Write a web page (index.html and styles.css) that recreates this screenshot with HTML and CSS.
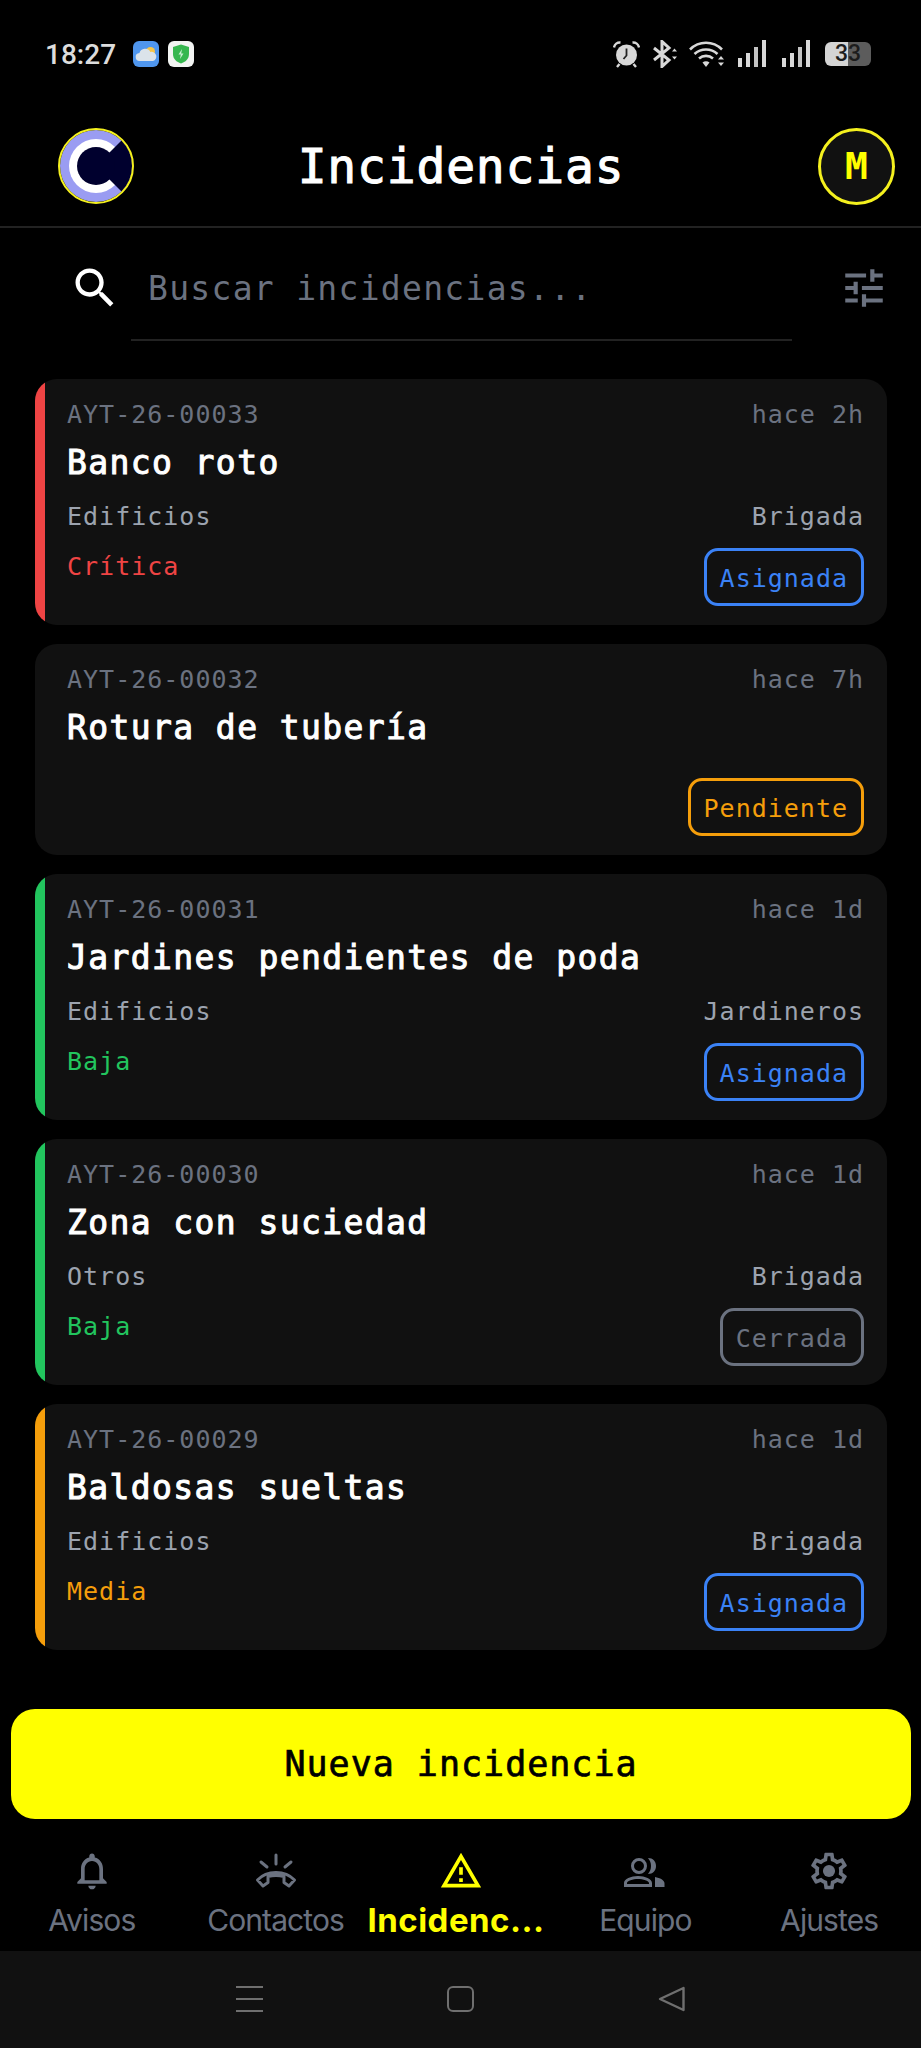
FILE: index.html
```html
<!DOCTYPE html>
<html lang="es">
<head>
  <meta charset="UTF-8" />
  <meta name="viewport" content="width=device-width, initial-scale=1.0"/>
  <title>Incidencias</title>
  <link rel="stylesheet" href="styles.css">
</head>
<body>
  <div class="app">

    <div class="status-bar">
      <div class="status-left">
        <span class="clock">18:27</span>
        <svg class="app-icon" viewBox="0 0 26 26">
          <rect width="26" height="26" rx="6" fill="#4f96ee"/>
          <circle cx="17.500" cy="10.500" r="4.500" fill="#f6c548"/>
          <path d="M7 20a4 4 0 0 1-.6-8 6 6 0 0 1 11-1 4.600 4.600 0 0 1 2.600 9z" fill="#dbe3ea"/>
        </svg>
        <svg class="app-icon" viewBox="0 0 26 26">
          <rect width="26" height="26" rx="6" fill="#f2f4f2"/>
          <path d="M13 3.500l8 2.500v7c0 5-3.500 8-8 9.500-4.500-1.500-8-4.500-8-9.500v-7z" fill="#36b74f"/>
          <path d="M14 8l-3.500 5.500h2.300l-.8 4.500 3.500-5.600h-2.300z" fill="#c9f0d2"/>
        </svg>
      </div>
      <div class="status-right">
        <svg class="st-alarm" viewBox="0 0 27 28">
          <circle cx="13.500" cy="15" r="10.500" fill="#d8d8d8"/>
          <path d="M13.500 8.500v7l-3 3.500" fill="none" stroke="#222" stroke-width="1.800"/>
          <path d="M1 7.500a6 6 0 0 1 6.500-5M26 7.500a6 6 0 0 0-6.500-5M6.500 24l-2.500 3M20.500 24l2.500 3" fill="none" stroke="#d8d8d8" stroke-width="2.400"/>
        </svg>
        <svg class="st-bt" viewBox="0 0 26 28">
          <path d="M2 8l15 12-7 6.500V1.500l7 6.500L2 20" fill="none" stroke="#d8d8d8" stroke-width="3"/>
          <path d="M20 11.500l2.500-3 2.500 3zM20 16.500l2.500 3 2.500-3z" fill="#d8d8d8"/>
        </svg>
        <svg class="st-wifi" viewBox="0 0 37 28">
          <path d="M1 9.500c9-9 23-9 32 0M5.500 14c6.500-6 16.500-6 23 0M10 18.500c4-3.500 10-3.500 14 0" fill="none" stroke="#d8d8d8" stroke-width="2.600"/>
          <path d="M13.500 22.500c2-1.600 5-1.600 7 0L17 27z" fill="#d8d8d8"/>
          <path d="M29 19.500l3-3.500 3 3.500zM29 22.500l3 3.500 3-3.500z" fill="#d8d8d8"/>
        </svg>
        <svg class="st-signal" viewBox="0 0 28 28">
          <rect x="0" y="18" width="4" height="9" fill="#d8d8d8"/>
          <rect x="8" y="13" width="4" height="14" fill="#d8d8d8"/>
          <rect x="16" y="7" width="4" height="20" opacity=".9" fill="#d8d8d8"/>
          <rect x="24" y="0" width="4" height="27" fill="#d8d8d8"/>
        </svg>
        <svg class="st-signal" viewBox="0 0 28 28">
          <rect x="0" y="18" width="4" height="9" fill="#d8d8d8"/>
          <rect x="8" y="13" width="4" height="14" fill="#d8d8d8"/>
          <rect x="16" y="7" width="4" height="20" opacity=".9" fill="#d8d8d8"/>
          <rect x="24" y="0" width="4" height="27" fill="#d8d8d8"/>
        </svg>
        <div class="battery"><span>33</span></div>
      </div>
    </div>

    <div class="top-bar">
      <svg class="logo" viewBox="0 0 76 76">
        <circle cx="38" cy="38" r="36" fill="#9a9cf2"/>
        <circle cx="38" cy="38" r="27" fill="#fff"/>
        <path d="M38 38L63.500 12.500A36 36 0 0 1 63.500 63.500z" fill="#00002e"/>
        <circle cx="38" cy="38" r="19" fill="#00002e"/>
        <circle cx="38" cy="38" r="37" fill="none" stroke="#f4f01e" stroke-width="2"/>
      </svg>
      <h1 class="page-title">Incidencias</h1>
      <div class="avatar">M</div>
    </div>

    <div class="search-row">
      <svg class="search-icon" viewBox="0 0 24 24">
        <path fill="#fff" d="M15.500 14h-.79l-.28-.27C15.410 12.590 16 11.110 16 9.500 16 5.910 13.090 3 9.500 3S3 5.910 3 9.500 5.910 16 9.500 16c1.610 0 3.090-.59 4.230-1.570l.27.28v.79l5 4.990L20.490 19l-4.990-5zm-6 0C7.010 14 5 11.990 5 9.500S7.010 5 9.500 5 14 7.010 14 9.500 11.990 14 9.500 14z"/>
      </svg>
      <div class="search-input">Buscar incidencias...</div>
      <svg class="filter-icon" viewBox="0 0 24 24">
        <path fill="#6b7280" d="M3 17v2h6v-2H3zM3 5v2h10V5H3zm10 16v-2h8v-2h-8v-2h-2v6h2zM7 9v2H3v2h4v2h2V9H7zm14 4v-2H11v2h10zm-6-4h2V7h4V5h-4V3h-2v6z"/>
      </svg>
    </div>

    <div class="card-list">
      <div class="card card-critica">
        <div class="card-row"><span class="card-id">AYT-26-00033</span><span class="card-time">hace 2h</span></div>
        <div class="card-title">Banco roto</div>
        <div class="card-row card-meta"><span>Edificios</span><span>Brigada</span></div>
        <div class="card-row card-foot">
          <span class="prio prio-critica">Crítica</span>
          <span class="badge badge-asignada">Asignada</span>
        </div>
      </div>

      <div class="card">
        <div class="card-row"><span class="card-id">AYT-26-00032</span><span class="card-time">hace 7h</span></div>
        <div class="card-title">Rotura de tubería</div>
        <div class="card-row card-foot card-foot-solo">
          <span></span>
          <span class="badge badge-pendiente">Pendiente</span>
        </div>
      </div>

      <div class="card card-baja">
        <div class="card-row"><span class="card-id">AYT-26-00031</span><span class="card-time">hace 1d</span></div>
        <div class="card-title">Jardines pendientes de poda</div>
        <div class="card-row card-meta"><span>Edificios</span><span>Jardineros</span></div>
        <div class="card-row card-foot">
          <span class="prio prio-baja">Baja</span>
          <span class="badge badge-asignada">Asignada</span>
        </div>
      </div>

      <div class="card card-baja">
        <div class="card-row"><span class="card-id">AYT-26-00030</span><span class="card-time">hace 1d</span></div>
        <div class="card-title">Zona con suciedad</div>
        <div class="card-row card-meta"><span>Otros</span><span>Brigada</span></div>
        <div class="card-row card-foot">
          <span class="prio prio-baja">Baja</span>
          <span class="badge badge-cerrada">Cerrada</span>
        </div>
      </div>

      <div class="card card-media">
        <div class="card-row"><span class="card-id">AYT-26-00029</span><span class="card-time">hace 1d</span></div>
        <div class="card-title">Baldosas sueltas</div>
        <div class="card-row card-meta"><span>Edificios</span><span>Brigada</span></div>
        <div class="card-row card-foot">
          <span class="prio prio-media">Media</span>
          <span class="badge badge-asignada">Asignada</span>
        </div>
      </div>
    </div>

    <button class="new-btn">Nueva incidencia</button>

    <div class="tab-bar">
      <div class="tab">
        <svg viewBox="0 0 24 24"><path d="M12 22c1.100 0 2-.9 2-2h-4c0 1.100.89 2 2 2zm6-6v-5c0-3.070-1.640-5.640-4.500-6.320V4c0-.83-.67-1.500-1.500-1.500s-1.500.67-1.500 1.500v.68C7.630 5.360 6 7.920 6 11v5l-2 2v1h16v-1l-2-2zm-2 1H8v-6c0-2.480 1.510-4.500 4-4.500s4 2.020 4 4.500v6z"/></svg>
        <span>Avisos</span>
      </div>
      <div class="tab">
        <svg viewBox="0 0 44 44"><path class="line" d="M3.500 31C13 21 31 21 40.500 31L35 37l-5-3.500v-6c-5-1.200-11-1.200-16 0v6L9 37z"/><path class="line" d="M22 6v9M7 13l6 5M37 13l-6 5"/></svg>
        <span>Contactos</span>
      </div>
      <div class="tab tab-active">
        <svg viewBox="0 0 24 24"><path d="M12 5.990L19.530 19H4.470L12 5.990M12 2L1 21h22L12 2zm1 14h-2v2h2v-2zm0-6h-2v4h2v-4z"/></svg>
        <span>Incidenc...</span>
      </div>
      <div class="tab">
        <svg viewBox="0 0 44 44"><path fill-rule="evenodd" d="M16 9a8 8 0 1 1 0 16 8 8 0 0 1 0-16zm0 3a5 5 0 1 0 0 10 5 5 0 0 0 0-10zM15 27c7 0 14 3 14 7v4H1v-4c0-4 7-7 14-7zm0 3c-5 0-11 2-11 4v1h22v-1c0-2-6-4-11-4zM25 9c5 0 8 3.500 8 8s-3 8-8 8c2-2.500 3-5 3-8s-1-5.500-3-8zM32 28c5 1 9.500 3 9.500 6.500V38H32z"/></svg>
        <span>Equipo</span>
      </div>
      <div class="tab">
        <svg viewBox="0 0 24 24"><path d="M19.430 12.980c.04-.32.07-.64.07-.98 0-.34-.03-.66-.07-.98l2.110-1.650c.19-.15.24-.42.12-.64l-2-3.460c-.09-.16-.26-.25-.44-.25-.06 0-.12.01-.17.03l-2.490 1c-.52-.4-1.080-.73-1.690-.98l-.38-2.650C14.460 2.180 14.250 2 14 2h-4c-.25 0-.46.18-.49.42l-.38 2.650c-.61.25-1.170.59-1.690.98l-2.490-1c-.06-.02-.12-.03-.18-.03-.17 0-.34.09-.43.25l-2 3.460c-.13.22-.07.49.12.64l2.110 1.650c-.04.32-.07.65-.07.98 0 .33.03.66.07.98l-2.110 1.650c-.19.15-.24.42-.12.64l2 3.460c.09.16.26.25.44.25.06 0 .12-.01.17-.03l2.490-1c.52.4 1.080.73 1.690.98l.38 2.650c.03.24.24.42.49.42h4c.25 0 .46-.18.49-.42l.38-2.650c.61-.25 1.170-.59 1.690-.98l2.490 1c.06.02.12.03.18.03.17 0 .34-.09.43-.25l2-3.460c.12-.22.07-.49-.12-.64l-2.110-1.650zm-1.980-1.710c.04.31.05.52.05.73 0 .21-.02.43-.05.73l-.14 1.130.89.7 1.080.84-.7 1.210-1.270-.51-1.040-.42-.9.68c-.43.32-.84.56-1.250.73l-1.060.43-.16 1.130-.2 1.350h-1.400l-.19-1.350-.16-1.130-1.060-.43c-.43-.18-.83-.41-1.230-.71l-.91-.7-1.060.43-1.270.51-.7-1.210 1.080-.84.89-.7-.14-1.130c-.03-.31-.05-.54-.05-.74s.02-.43.05-.73l.14-1.130-.89-.7-1.080-.84.7-1.210 1.270.51 1.040.42.9-.68c.43-.32.84-.56 1.250-.73l1.060-.43.16-1.130.2-1.350h1.390l.19 1.350.16 1.130 1.060.43c.43.18.83.41 1.230.71l.91.7 1.060-.43 1.270-.51.7 1.210-1.070.85-.89.7.14 1.130z"/><circle cx="12" cy="12" r="3.300"/></svg>
        <span>Ajustes</span>
      </div>
    </div>

    <div class="system-nav">
      <div class="sys-menu"><i></i><i></i><i></i></div>
      <div class="sys-home"></div>
      <svg class="sys-back" viewBox="0 0 27 26">
        <path d="M25.500 2L2 13l23.500 11z" fill="none" stroke="#6f6f6f" stroke-width="2.400" stroke-linejoin="round"/>
      </svg>
    </div>

  </div>
</body>
</html>
```

FILE: styles.css
```css
* {
  box-sizing: border-box;
}

body {
  margin: 0;
  padding: 0;
  background-color: #000;
}

.app {
  width: 921px;
  height: 2048px;
  overflow: hidden;
  display: flex;
  flex-direction: column;
  background-color: #000;
  color: #fff;
  font-family: "DejaVu Sans Mono", "Liberation Mono", monospace;
}

/* Barre d'etat */
.status-bar {
  height: 108px;
  flex-shrink: 0;
  display: flex;
  justify-content: space-between;
  align-items: center;
  padding: 0 50px 0 45px;
}

.status-left,
.status-right {
  display: flex;
  align-items: center;
}

.clock {
  font-family: Roboto, sans-serif;
  font-weight: 500;
  font-size: 28px;
  color: #dcdcdc;
  margin-right: 17px;
}

.app-icon {
  width: 26px;
  height: 26px;
  margin-right: 9px;
}

.st-alarm {
  width: 27px;
  height: 28px;
  margin-right: 12px;
}

.st-bt {
  width: 26px;
  height: 28px;
  margin-right: 11px;
}

.st-wifi {
  width: 37px;
  height: 28px;
  margin-right: 12px;
}

.st-signal {
  width: 28px;
  height: 28px;
  margin-right: 16px;
}

.battery {
  width: 46px;
  height: 24px;
  margin-left: -1px;
  border-radius: 6px;
  background: linear-gradient(to right, #d4d4d4 0 50%, #5c5c5c 50% 100%);
  color: #1c1c1c;
  font-family: Roboto, sans-serif;
  font-size: 23px;
  font-weight: 500;
  line-height: 24px;
  text-align: center;
}

/* Entete */
.top-bar {
  height: 120px;
  flex-shrink: 0;
  display: grid;
  grid-template-columns: 1fr auto 1fr;
  align-items: start;
  padding: 20px 26px 0 58px;
  border-bottom: 2px solid #222;
}

.logo {
  width: 76px;
  height: 76px;
}

.page-title {
  margin: 0 31px 0 0;
  font-size: 48px;
  font-weight: normal;
  line-height: 76px;
  letter-spacing: 0.8px;
  -webkit-text-stroke: 1px #fff;
}

.avatar {
  justify-self: end;
  width: 77px;
  height: 77px;
  border: 3px solid #f4f01e;
  border-radius: 50%;
  background-color: #111;
  color: #ffff00;
  font-size: 38px;
  font-weight: bold;
  line-height: 70px;
  text-align: center;
}

/* Recherche */
.search-row {
  display: flex;
  align-items: flex-start;
  padding: 0 30px 0 69px;
  height: 151px;
  flex-shrink: 0;
}

.search-icon {
  width: 52px;
  height: 52px;
  margin-top: 34px;
  margin-right: 10px;
}

.search-input {
  width: 661px;
  height: 113px;
  padding-top: 37px;
  border-bottom: 2px solid #222;
  color: #6b7280;
  font-size: 33px;
  line-height: 48px;
  letter-spacing: 1.3px;
  padding-left: 17px;
}

.filter-icon {
  width: 50px;
  height: 50px;
  margin-top: 35px;
  margin-left: 47px;
}

/* Cartes */
.card-list {
  display: flex;
  flex-direction: column;
  gap: 19px;
  padding: 0 34px 0 35px;
}

.card {
  background-color: #111;
  border-radius: 22px;
  padding: 20px 23px 19px 32px;
  color: #9ca3af;
  font-size: 25px;
  line-height: 32px;
  letter-spacing: 1px;
}

.card-critica {
  background: linear-gradient(to right, #ef4444 10px, #111 10px);
}

.card-baja {
  background: linear-gradient(to right, #22c55e 10px, #111 10px);
}

.card-media {
  background: linear-gradient(to right, #f59e0b 10px, #111 10px);
}

.card-row {
  display: flex;
  justify-content: space-between;
  align-items: flex-start;
}

.card-id,
.card-time {
  color: #6b7280;
}

.card-title {
  margin-top: 8px;
  color: #fff;
  font-size: 33px;
  font-weight: normal;
  line-height: 48px;
  letter-spacing: 1.4px;
  -webkit-text-stroke: 1px #fff;
}

.card-meta {
  margin-top: 14px;
}

.card-foot {
  margin-top: 15px;
}

.card-foot-solo {
  margin-top: 26px;
}

.prio {
  padding-top: 3px;
}

.prio-critica {
  color: #ef4444;
}

.prio-baja {
  color: #22c55e;
}

.prio-media {
  color: #f59e0b;
}

.badge {
  height: 58px;
  padding: 0 13px;
  border: 3px solid;
  border-radius: 14px;
  line-height: 55px;
}

.badge-asignada {
  color: #3b82f6;
}

.badge-pendiente {
  color: #f59e0b;
}

.badge-cerrada {
  color: #6b7280;
}

/* Bouton principal */
.new-btn {
  flex-shrink: 0;
  height: 110px;
  margin: 59px 10px 0 11px;
  border: none;
  border-radius: 24px;
  background-color: #ffff00;
  color: #000;
  font-family: inherit;
  font-size: 35px;
  font-weight: normal;
  letter-spacing: 1px;
  -webkit-text-stroke: 0.7px #000;
  cursor: pointer;
}

/* Onglets */
.tab-bar {
  height: 132px;
  flex-shrink: 0;
  display: grid;
  grid-template-columns: repeat(5, 1fr);
  padding-top: 30px;
}

.tab {
  display: flex;
  flex-direction: column;
  align-items: center;
  color: #6b7280;
  font-family: Inter, sans-serif;
  font-size: 30px;
  line-height: 44px;
  letter-spacing: -0.9px;
  white-space: nowrap;
}

.tab span {
  margin-top: 5px;
}

.tab svg {
  width: 44px;
  height: 44px;
  fill: #6b7280;
}

.tab svg .line {
  fill: none;
  stroke: #6b7280;
  stroke-width: 3px;
  stroke-linecap: round;
  stroke-linejoin: round;
}

.tab-active {
  color: #ffff00;
  font-size: 33px;
  font-weight: bold;
  letter-spacing: 0.5px;
}

.tab-active span {
  margin-right: 9px;
}

.tab-active svg {
  fill: #ffff00;
}

/* Navigation systeme */
.system-nav {
  flex: 1;
  display: flex;
  justify-content: center;
  align-items: center;
  gap: 184px;
  padding-bottom: 2px;
  background-color: #111;
}

.sys-menu {
  width: 27px;
  height: 26px;
  display: flex;
  flex-direction: column;
  justify-content: space-between;
}

.sys-menu i {
  display: block;
  height: 2px;
  background-color: #6f6f6f;
}

.sys-home {
  width: 27px;
  height: 26px;
  border: 2px solid #6f6f6f;
  border-radius: 6px;
}

.sys-back {
  width: 27px;
  height: 26px;
}
```
